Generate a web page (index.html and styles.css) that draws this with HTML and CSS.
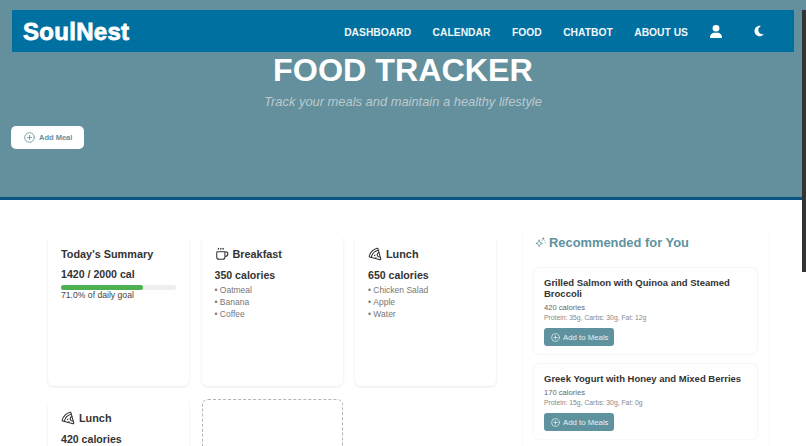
FILE: index.html
```html
<!DOCTYPE html>
<html lang="en">
<head>
    <meta charset="UTF-8">
    <meta name="viewport" content="width=device-width, initial-scale=1.0">
    <title>SoulNest - Food Tracker</title>
    <link rel="stylesheet" href="styles.css">
</head>
<body>

    <header class="hero">
        <nav class="navbar">
            <a href="#" class="logo">SoulNest</a>
            <ul class="nav-links">
                <li><a href="#">Dashboard</a></li>
                <li><a href="#">Calendar</a></li>
                <li><a href="#">Food</a></li>
                <li><a href="#">Chatbot</a></li>
                <li><a href="#">About Us</a></li>
                <li class="nav-icon">
                    <svg width="12" height="13" viewBox="0 0 448 512" preserveAspectRatio="none" fill="#fff"><path d="M224 256a128 128 0 1 0 0-256 128 128 0 1 0 0 256zm-45.700 48C79.800 304 0 383.800 0 482.300 0 498.700 13.300 512 29.700 512h388.600c16.400 0 29.700-13.300 29.700-29.700C448 383.800 368.200 304 269.700 304h-91.400z"/></svg>
                </li>
                <li class="nav-icon">
                    <svg width="10" height="12" viewBox="0 0 384 512" fill="#fff"><path d="M223.500 32C100 32 0 132.300 0 256s100 224 223.500 224c60.600 0 115.500-24.200 155.800-63.400 5-4.900 6.300-12.500 3.100-18.700s-10.100-9.700-17-8.500c-9.800 1.700-19.800 2.600-30.100 2.600-96.900 0-175.500-78.800-175.500-176 0-65.800 36-123.100 89.300-153.300 6.100-3.500 9.200-10.500 7.700-17.300s-7.300-11.900-14.300-12.500c-6.300-.5-12.600-.8-19-.8z"/></svg>
                </li>
            </ul>
        </nav>

        <h1 class="hero-title">FOOD TRACKER</h1>
        <p class="hero-sub">Track your meals and maintain a healthy lifestyle</p>

        <button class="add-meal-btn">
            <svg width="11" height="11" viewBox="0 0 24 24" fill="none" stroke="currentColor" stroke-width="1.8" stroke-linecap="round"><circle cx="12" cy="12" r="10.500"/><path d="M12 7.500v9M7.500 12h9"/></svg>
            Add Meal
        </button>
    </header>

    <main class="content">
        <section class="meal-grid">
            <div class="card">
                <h3 class="card-title">Today's Summary</h3>
                <p class="calories calories-total">1420 / 2000 cal</p>
                <div class="progress"><div class="progress-fill" style="width: 71%"></div></div>
                <p class="progress-label">71.0% of daily goal</p>
            </div>

            <div class="card">
                <h3 class="card-title">
                    <svg width="14" height="14" viewBox="0 0 24 24" fill="none" stroke="#333" stroke-width="1.8" stroke-linecap="round" stroke-linejoin="round"><path d="M10 2v2"/><path d="M14 2v2"/><path d="M6 2v2"/><path d="M16 8a1 1 0 0 1 1 1v8a4 4 0 0 1-4 4H7a4 4 0 0 1-4-4V9a1 1 0 0 1 1-1h14a4 4 0 1 1 0 8h-1"/></svg>
                    Breakfast
                </h3>
                <p class="calories">350 calories</p>
                <ul class="food-list">
                    <li>Oatmeal</li>
                    <li>Banana</li>
                    <li>Coffee</li>
                </ul>
            </div>

            <div class="card">
                <h3 class="card-title">
                    <svg width="14" height="14" viewBox="0 0 24 24" fill="none" stroke="#333" stroke-width="1.8" stroke-linecap="round" stroke-linejoin="round"><path d="m12 14-1 1"/><path d="m13.750 18.250-1.250 1.420"/><path d="M17.775 5.654a15.680 15.680 0 0 0-12.121 12.120"/><path d="M18.800 9.300a1 1 0 0 0 2.100 7.700"/><path d="M21.964 20.732a1 1 0 0 1-1.232 1.232l-18-5a1 1 0 0 1-.695-1.232A19.680 19.680 0 0 1 15.732 2.037a1 1 0 0 1 1.232.695z"/></svg>
                    Lunch
                </h3>
                <p class="calories">650 calories</p>
                <ul class="food-list">
                    <li>Chicken Salad</li>
                    <li>Apple</li>
                    <li>Water</li>
                </ul>
            </div>

            <div class="card">
                <h3 class="card-title">
                    <svg width="14" height="14" viewBox="0 0 24 24" fill="none" stroke="#333" stroke-width="1.8" stroke-linecap="round" stroke-linejoin="round"><path d="m12 14-1 1"/><path d="m13.750 18.250-1.250 1.420"/><path d="M17.775 5.654a15.680 15.680 0 0 0-12.121 12.120"/><path d="M18.800 9.300a1 1 0 0 0 2.100 7.700"/><path d="M21.964 20.732a1 1 0 0 1-1.232 1.232l-18-5a1 1 0 0 1-.695-1.232A19.680 19.680 0 0 1 15.732 2.037a1 1 0 0 1 1.232.695z"/></svg>
                    Lunch
                </h3>
                <p class="calories">420 calories</p>
            </div>

            <div class="card card-empty"></div>
        </section>

        <aside class="recommend">
            <h2 class="recommend-title">
                <svg width="11" height="11" viewBox="0 0 24 24" fill="none" stroke="#5f929f" stroke-width="2" stroke-linecap="round" stroke-linejoin="round"><path d="M9 7c.7 4 2.500 6 7 7-4.500 1-6.300 3-7 7-.7-4-2.500-6-7-7 4.500-1 6.300-3 7-7z"/><path d="M18 2v3M16.500 3.500h3"/><path d="M21 8.500v.01M22.500 13v.01M15 7v.01"/></svg>
                Recommended for You
            </h2>

            <div class="rec-card">
                <h4>Grilled Salmon with Quinoa and Steamed Broccoli</h4>
                <p class="rec-cal">420 calories</p>
                <p class="rec-macros">Protein: 35g, Carbs: 30g, Fat: 12g</p>
                <button class="rec-btn">
                    <svg width="9" height="9" viewBox="0 0 24 24" fill="none" stroke="currentColor" stroke-width="2" stroke-linecap="round"><circle cx="12" cy="12" r="10.500"/><path d="M12 7.500v9M7.500 12h9"/></svg>
                    Add to Meals
                </button>
            </div>

            <div class="rec-card">
                <h4>Greek Yogurt with Honey and Mixed Berries</h4>
                <p class="rec-cal">170 calories</p>
                <p class="rec-macros">Protein: 15g, Carbs: 30g, Fat: 0g</p>
                <button class="rec-btn">
                    <svg width="9" height="9" viewBox="0 0 24 24" fill="none" stroke="currentColor" stroke-width="2" stroke-linecap="round"><circle cx="12" cy="12" r="10.500"/><path d="M12 7.500v9M7.500 12h9"/></svg>
                    Add to Meals
                </button>
            </div>
        </aside>
    </main>

    <div class="scroll-thumb"></div>

</body>
</html>
```

FILE: styles.css
```css
:root {
    --color-hero: #63909c;
    --color-nav: #0070a0;
    --color-teal: #5f929f;
    --color-dark: #333333;
    --color-muted: #777777;
}

* { box-sizing: border-box; }
html, body { height: 446px; overflow: hidden; }
body {
    margin: 0;
    background-color: #ffffff;
    color: var(--color-dark);
    font-family: 'Liberation Sans', Arial, sans-serif;
    position: relative;
}
h1, h2, h3, h4, p, ul { margin: 0; padding: 0; }

/* --- Hero --- */
.hero {
    height: 200px;
    padding: 10px 12px 0;
    background-color: var(--color-hero);
    border-bottom: 3px solid #0a5480;
}
.navbar {
    height: 42px;
    padding: 0 11px;
    display: flex;
    align-items: center;
    justify-content: space-between;
    background-color: var(--color-nav);
}
.logo {
    margin-top: 1px;
    color: #ffffff;
    font-size: 24px;
    font-weight: 700;
    letter-spacing: 0.3px;
    -webkit-text-stroke: 0.8px #ffffff;
    text-decoration: none;
}
.nav-links {
    display: flex;
    align-items: center;
    gap: 21.500px;
    list-style: none;
}
.nav-links a {
    color: #f0f6f9;
    font-size: 10.300px;
    font-weight: 700;
    text-transform: uppercase;
    text-decoration: none;
}
.nav-icon { display: flex; padding-right: 11px; }
.nav-icon:last-child { padding-right: 19px; }

.hero-title {
    color: #ffffff;
    font-size: 32.250px;
    line-height: 36px;
    text-align: center;
}
.hero-sub {
    margin-top: 6px;
    color: #bccacf;
    font-size: 12.900px;
    font-style: italic;
    line-height: 16px;
    text-align: center;
}
.add-meal-btn {
    margin: 16px 0 0 -1px;
    width: 73px;
    height: 23px;
    padding: 0 0 0 13px;
    display: flex;
    align-items: center;
    gap: 4px;
    border: 0;
    border-radius: 5px;
    background-color: #ffffff;
    color: var(--color-hero);
    font-family: inherit;
    font-size: 7.500px;
    font-weight: 700;
}

/* --- Conteudo --- */
.content {
    height: 246px;
    overflow: hidden;
    padding: 25px 38px 0 48px;
    display: flex;
    align-items: flex-start;
    gap: 28px;
}
.meal-grid {
    width: 447px;
    margin-top: 10px;
    display: grid;
    grid-template-columns: repeat(3, 141px);
    grid-auto-rows: 151px;
    gap: 13px 12.500px;
}
.card {
    padding: 12px 13px;
    border-radius: 6px;
    background-color: #ffffff;
    box-shadow: 0 1px 3px rgba(0, 0, 0, 0.09);
}
.card-empty {
    box-shadow: none;
    border: 1px dashed #b5b5b5;
}
.card-title {
    height: 14px;
    display: flex;
    align-items: center;
    gap: 4px;
    font-size: 10.850px;
}
.calories {
    margin-top: 7px;
    font-size: 10.600px;
    font-weight: 700;
    line-height: 14px;
}
.calories-total { margin-top: 6px; }
.progress {
    height: 5px;
    margin-top: 4px;
    border-radius: 3px;
    background-color: #eeeeee;
}
.progress-fill {
    height: 100%;
    border-radius: 3px;
    background-color: #4caf50;
}
.progress-label {
    font-size: 8.650px;
    line-height: 10px;
    color: #444444;
}
.food-list {
    margin-top: 2px;
    list-style: none;
    font-size: 8.500px;
    line-height: 12px;
    color: var(--color-muted);
}
.food-list li::before { content: "\2022\00a0"; }

/* --- Recomendados --- */
.recommend {
    width: 246px;
    height: 300px;
    padding: 8px 11px;
    border-radius: 6px;
    background-color: #ffffff;
    box-shadow: 0 1px 3px rgba(0, 0, 0, 0.06);
}
.recommend-title {
    height: 18px;
    margin-left: 1px;
    display: flex;
    align-items: center;
    gap: 3px;
    color: var(--color-teal);
    font-size: 12.900px;
}
.rec-card {
    margin-top: 10px;
    padding: 9px 10px 8px;
    border-radius: 5px;
    background-color: #ffffff;
    box-shadow: 0 0 2px rgba(0, 0, 0, 0.12);
}
.recommend-title + .rec-card { margin-top: 17px; }
.rec-card h4 { font-size: 9.500px; line-height: 11px; }
.rec-cal {
    margin-top: 3px;
    font-size: 7.600px;
    line-height: 11px;
    color: #666666;
}
.rec-macros {
    font-size: 6.800px;
    line-height: 10px;
    color: #888888;
}
.rec-btn {
    margin-top: 5px;
    width: 70px;
    height: 18px;
    padding: 0 0 0 7px;
    display: flex;
    align-items: center;
    gap: 3px;
    border: 0;
    border-radius: 3px;
    background-color: var(--color-teal);
    color: #e8f0f2;
    font-family: inherit;
    font-size: 7.800px;
}

/* --- Barra de rolagem --- */
.scroll-thumb {
    position: absolute;
    top: 10px;
    right: 0;
    width: 4px;
    height: 262px;
    background-color: #333333;
}
```
